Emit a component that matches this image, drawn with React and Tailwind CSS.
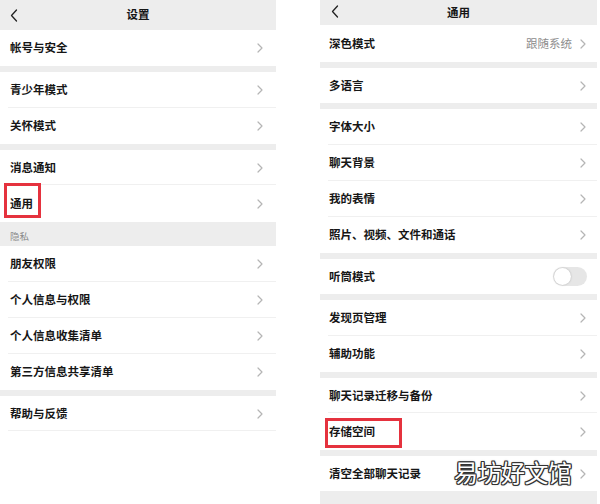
const FONT = "font-['Noto_Sans_CJK_SC','Noto_Sans',sans-serif]";

function Chevron() {
    return (
        <svg width="6" height="10" viewBox="0 0 6 10" fill="none">
            <path d="M1 1l4 4-4 4" stroke="#b5b5b5" strokeWidth="1.2" strokeLinecap="round" strokeLinejoin="round" />
        </svg>
    );
}

function Back() {
    return (
        <svg width="8" height="13" viewBox="0 0 8 13" fill="none">
            <path d="M6.5 1L1.5 6.5l5 5.5" stroke="#222" strokeWidth="1.3" strokeLinecap="round" strokeLinejoin="round" />
        </svg>
    );
}

// una fila de la lista; h = altura en px, line = separador abajo
function Row({ label, h = 36, line = true, right, pl = 'pl-[10px]', pr = 'pr-[13px]', children }) {
    return (
        <div className="relative bg-white" style={{ height: h }}>
            <div className={`h-full flex items-center justify-between ${pl} ${pr}`}>
                <span className="text-[11.5px] font-semibold text-[#161616]">{label}</span>
                {right ?? <Chevron />}
            </div>
            {line && <div className="absolute bottom-0 left-[8px] right-0 h-px bg-[#f0f0f0]" />}
            {children}
        </div>
    );
}

function Gap() {
    return <div className="h-[6px] bg-[#ededed]" />;
}

function Toggle() {
    return (
        <div className="w-[34px] h-[19px] rounded-full bg-[#e6e6e6] p-[1px] flex items-center">
            <div className="w-[17px] h-[17px] rounded-full bg-white shadow-[0_0_2px_rgba(0,0,0,0.25)]" />
        </div>
    );
}

export default function App() {
    return (
        <div className={`w-[600px] h-[504px] bg-white flex overflow-hidden ${FONT}`}>
            {/* Izquierda: 设置 */}
            <div className="w-[276px] flex flex-col">
                <div className="h-[30px] bg-[#ededed] relative flex items-center justify-center">
                    <div className="absolute left-[10px] top-[9px]"><Back /></div>
                    <span className="text-[11.5px] font-semibold text-[#161616]">设置</span>
                </div>
                <Row label="帐号与安全" line={false} />
                <Gap />
                <Row label="青少年模式" />
                <Row label="关怀模式" line={false} />
                <Gap />
                <Row label="消息通知" h={35} />
                <Row label="通用" h={37} line={false}>
                    <div className="absolute left-[4px] top-[-2px] w-[37px] h-[35px] border-[3px] border-[#e5323e]" />
                </Row>
                <div className="h-[24px] bg-[#ededed] flex items-center pl-[10px] pt-[5px]">
                    <span className="text-[9.5px] text-[#8a8a8a]">隐私</span>
                </div>
                <Row label="朋友权限" />
                <Row label="个人信息与权限" />
                <Row label="个人信息收集清单" />
                <Row label="第三方信息共享清单" line={false} />
                <Gap />
                <Row label="帮助与反馈" h={35} />
                <div className="flex-1 bg-white" />
            </div>

            <div className="w-[44px] bg-white" />

            {/* Derecha: 通用 */}
            <div className="relative w-[277px] flex flex-col bg-[#ededed]">
                <div className="h-[25px] bg-[#ededed] relative flex items-center justify-center">
                    <div className="absolute left-[11px] top-[5px]"><Back /></div>
                    <span className="text-[11.5px] font-semibold text-[#161616]">通用</span>
                </div>
                <Row
                    label="深色模式"
                    h={37}
                    line={false}
                    pl="pl-[9px]"
                    pr="pr-[11px]"
                    right={
                        <div className="flex items-center gap-[8px]">
                            <span className="text-[11.5px] text-[#8d8d8d]">跟随系统</span>
                            <Chevron />
                        </div>
                    }
                />
                <Gap />
                <Row label="多语言" h={35} line={false} pl="pl-[9px]" pr="pr-[11px]" />
                <Gap />
                <Row label="字体大小" pl="pl-[9px]" pr="pr-[11px]" />
                <Row label="聊天背景" pl="pl-[9px]" pr="pr-[11px]" />
                <Row label="我的表情" pl="pl-[9px]" pr="pr-[11px]" />
                <Row label="照片、视频、文件和通话" line={false} pl="pl-[9px]" pr="pr-[11px]" />
                <Gap />
                <Row label="听筒模式" h={35} line={false} pl="pl-[9px]" pr="pr-[10px]" right={<Toggle />} />
                <Gap />
                <Row label="发现页管理" pl="pl-[9px]" pr="pr-[11px]" />
                <Row label="辅助功能" line={false} pl="pl-[9px]" pr="pr-[11px]" />
                <Gap />
                <Row label="聊天记录迁移与备份" h={35} pl="pl-[9px]" pr="pr-[11px]" />
                <Row label="存储空间" h={37} line={false} pl="pl-[9px]" pr="pr-[11px]">
                    <div className="absolute left-[5px] top-[5px] w-[77px] h-[30px] border-[3px] border-[#e5323e]" />
                </Row>
                <Gap />
                <Row label="清空全部聊天记录" h={35} line={false} pl="pl-[9px]" pr="pr-[11px]" />
                <div className="flex-1 bg-[#ededed]" />

                {/* marca de agua */}
                <div className="absolute left-[134px] top-[455px] text-[24px] leading-[34px] text-white tracking-[-0.5px] [text-shadow:1px_0_0_#333,-1px_0_0_#333,0_1px_0_#333,0_-1px_0_#333,1px_1px_0_#333,-1px_-1px_0_#333,1px_-1px_0_#333,-1px_1px_0_#333,0_0_3px_#888]">
                    易坊好文馆
                </div>
            </div>
            <div className="flex-1 bg-white" />
        </div>
    );
}
